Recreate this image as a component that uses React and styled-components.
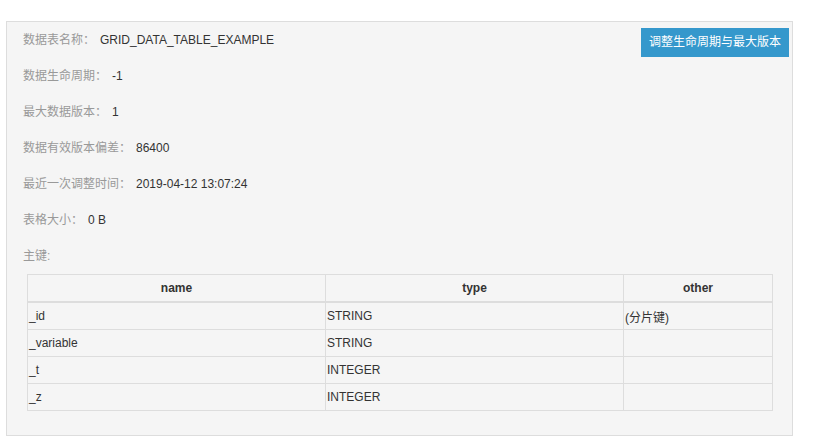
import React from 'react'
import styled, { createGlobalStyle } from 'styled-components'

const GlobalStyle = createGlobalStyle`
  html, body {
    margin: 0;
    padding: 0;
    background: #fff;
    font-family: "Liberation Sans", "Noto Sans CJK SC", sans-serif;
  }
`

const Page = styled.div`
  padding: 21px 23px 10px 6px;
`

const Panel = styled.section`
  background-color: #f5f5f5;
  border: 1px solid #ddd;
  padding: 0 3px 24px 16px;
  height: 389px;
`

const InfoRow = styled.div`
  display: flex;
  justify-content: space-between;
  align-items: flex-start;
  height: 36px;
  line-height: 36px;
  font-size: 12px;
`

const Label = styled.span`
  color: #999;
  margin-right: 5px;
`

const Value = styled.span`
  color: #333;
`

const Button = styled.button`
  margin-top: 6px;
  height: 29px;
  padding: 0 8px;
  border: none;
  background-color: #3598cc;
  color: #fff;
  font-family: "Liberation Sans", "Noto Sans CJK SC", sans-serif;
  font-size: 12px;
  line-height: 29px;
  cursor: pointer;
`

const Table = styled.table`
  width: 746px;
  margin-left: 4px;
  border-collapse: collapse;
  font-size: 12px;
  color: #333;

  th, td {
    border: 1px solid #ddd;
    padding: 0 1px;
    text-align: left;
  }

  th {
    height: 26px;
    text-align: center;
    font-weight: bold;
    border-bottom-width: 2px;
  }

  td {
    height: 26px;
  }
`

const Col = styled.col`
  width: ${p => p.$w};
`

const info = [
  { label: '数据表名称：', value: 'GRID_DATA_TABLE_EXAMPLE' },
  { label: '数据生命周期：', value: '-1' },
  { label: '最大数据版本：', value: '1' },
  { label: '数据有效版本偏差：', value: '86400' },
  { label: '最近一次调整时间：', value: '2019-04-12 13:07:24' },
  { label: '表格大小：', value: '0 B' },
  { label: '主键:', value: '' },
]

const keys = [
  { name: '_id', type: 'STRING', other: '(分片键)' },
  { name: '_variable', type: 'STRING', other: '' },
  { name: '_t', type: 'INTEGER', other: '' },
  { name: '_z', type: 'INTEGER', other: '' },
]

export default function App() {
  return (
    <Page>
      <GlobalStyle />
      <Panel>
        {info.map((row, i) => (
          <InfoRow key={row.label}>
            <div>
              <Label>{row.label}</Label>
              <Value>{row.value}</Value>
            </div>
            {i === 0 && <Button>调整生命周期与最大版本</Button>}
          </InfoRow>
        ))}
        <Table>
          <colgroup>
            <Col $w="40%" />
            <Col $w="40%" />
            <Col $w="20%" />
          </colgroup>
          <thead>
            <tr>
              <th>name</th>
              <th>type</th>
              <th>other</th>
            </tr>
          </thead>
          <tbody>
            {keys.map(k => (
              <tr key={k.name}>
                <td>{k.name}</td>
                <td>{k.type}</td>
                <td>{k.other}</td>
              </tr>
            ))}
          </tbody>
        </Table>
      </Panel>
    </Page>
  )
}
